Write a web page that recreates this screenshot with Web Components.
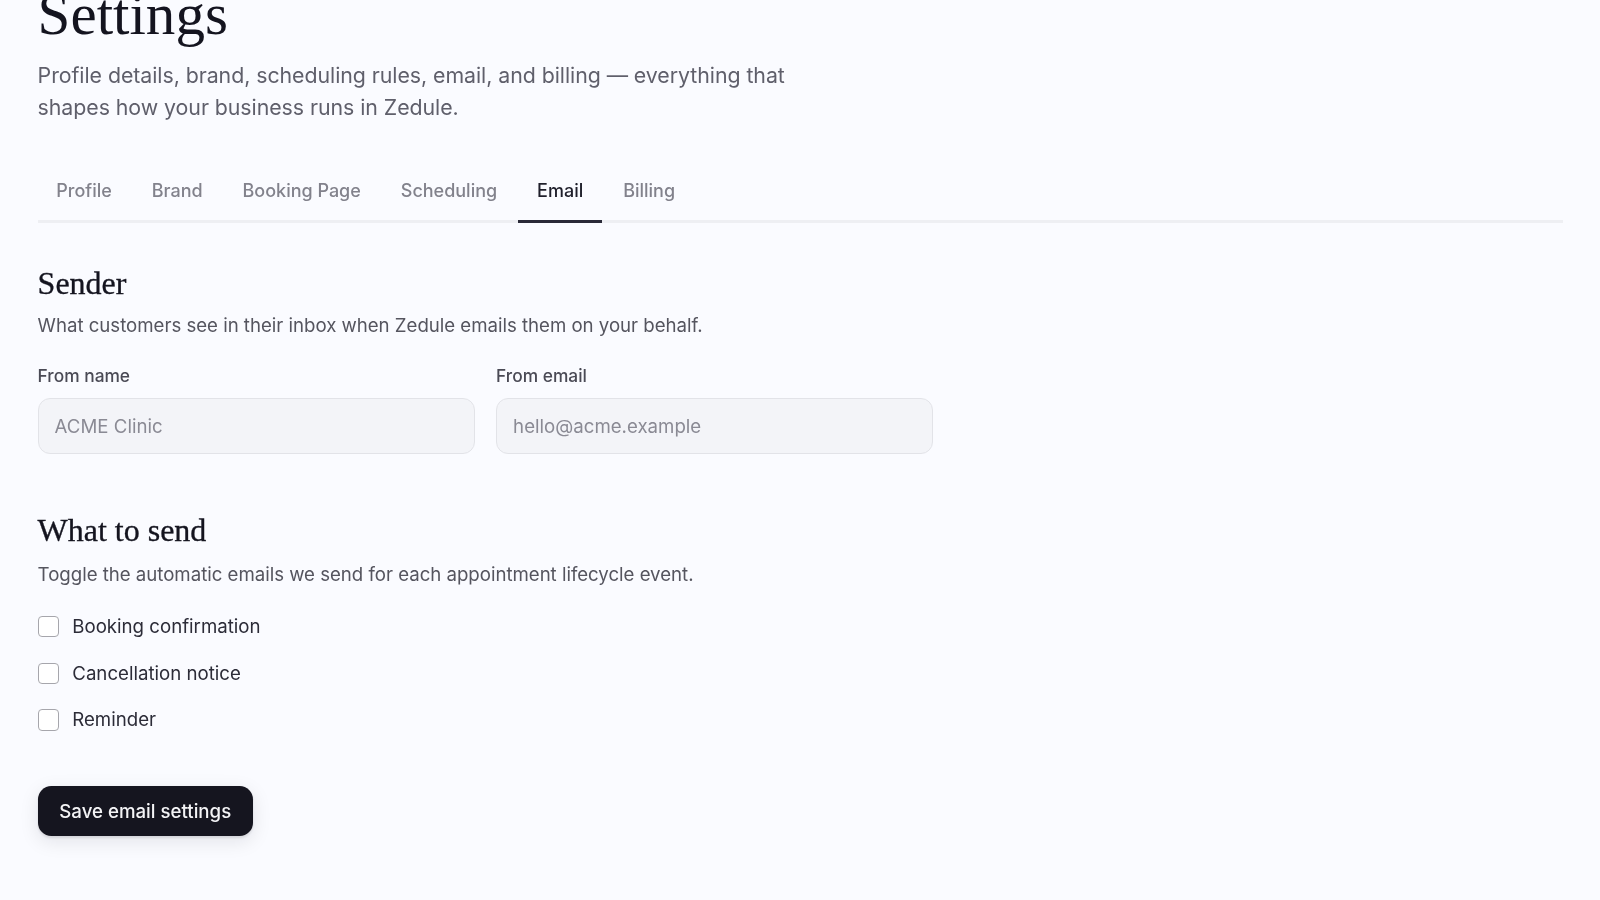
<!doctype html>
<html lang="en"><head><meta charset="utf-8"><title>Settings</title>
<style>
html{zoom:1.3333;background:#fafbff}
body{margin:0;background:#fafbff;font-family:Inter,"Noto Sans",sans-serif;overflow:hidden;height:675px}
</style></head><body>
<settings-page>
  <page-head title="Settings">Profile details, brand, scheduling rules, email, and billing — everything that shapes how your business runs in Zedule.</page-head>
  <tab-bar>
    <tab-item>Profile</tab-item><tab-item>Brand</tab-item><tab-item>Booking Page</tab-item><tab-item>Scheduling</tab-item><tab-item active>Email</tab-item><tab-item>Billing</tab-item>
  </tab-bar>
  <form-section heading="Sender" note="What customers see in their inbox when Zedule emails them on your behalf.">
    <field-grid>
      <text-field label="From name" placeholder="ACME Clinic"></text-field>
      <text-field label="From email" placeholder="hello@acme.example"></text-field>
    </field-grid>
  </form-section>
  <form-section class="second" heading="What to send" note="Toggle the automatic emails we send for each appointment lifecycle event.">
    <check-list>
      <check-row>Booking confirmation</check-row>
      <check-row>Cancellation notice</check-row>
      <check-row>Reminder</check-row>
    </check-list>
  </form-section>
  <save-button>Save email settings</save-button>
</settings-page>
<script>
function def(name, html, setup){
  customElements.define(name, class extends HTMLElement{
    connectedCallback(){
      if(this.shadowRoot) return;
      const r=this.attachShadow({mode:'open'});
      r.innerHTML=html;
      if(setup) setup(this,r);
    }
  });
}
def('settings-page',`<style>:host{display:block;padding:0 28px 0 28.2px;margin-top:-14.75px;filter:blur(.5px)}</style><slot></slot>`);
def('page-head',`<style>
:host{display:block}
h1{margin:0;font:400 44.3px/52px "Liberation Serif",serif;color:#14141f}
p{margin:6.75px 0 0;max-width:580px;font:400 16px/24px Inter,sans-serif;letter-spacing:-.04px;color:#5f5f6b}
</style><h1></h1><p><slot></slot></p>`,(h,r)=>{r.querySelector('h1').textContent=h.getAttribute('title')});
def('tab-bar',`<style>:host{display:flex;gap:2px;margin-top:30px;border-bottom:2.26px solid #eeeff3}</style><slot></slot>`);
def('tab-item',`<style>
:host{display:block;padding:11.75px 14px 11.5px;margin-bottom:-2.26px;font:500 13.5px/20px Inter,sans-serif;color:#82828c;border-bottom:2.26px solid transparent}
:host([active]){color:#1f1f2b;border-bottom-color:#2a2a38}
</style><slot></slot>`);
def('form-section',`<style>
:host{display:block;margin-top:29.5px}
:host(.second){margin-top:42.3px}
h2{margin:0;font:400 24px/30px "Liberation Serif",serif;color:#14141f;-webkit-text-stroke:.25px #14141f}
p{margin:7.6px 0 18.6px;font:400 14px/20px Inter,sans-serif;letter-spacing:-.02px;color:#55555f}
:host(.second) p{margin:8.7px 0 18.9px}
</style><h2></h2><p></p><slot></slot>`,(h,r)=>{r.querySelector('h2').textContent=h.getAttribute('heading');r.querySelector('p').textContent=h.getAttribute('note')});
def('field-grid',`<style>:host{display:grid;grid-template-columns:1fr 1fr;gap:16px;max-width:671.8px}</style><slot></slot>`);
def('text-field',`<style>
:host{display:block}
label{display:block;margin-bottom:7.4px;font:500 13px/18px Inter,sans-serif;color:#4a4a55}
input{display:block;box-sizing:border-box;width:100%;height:42px;padding:0 12px;border:1px solid #e2e3e8;border-radius:9px;background:#f3f4f8;font:400 14px Inter,sans-serif;color:#14141f}
input::placeholder{color:#8a8a94;opacity:1}
</style><label></label><input disabled>`,(h,r)=>{r.querySelector('label').textContent=h.getAttribute('label');r.querySelector('input').placeholder=h.getAttribute('placeholder')});
def('check-list',`<style>:host{display:flex;flex-direction:column;gap:15px}</style><slot></slot>`);
def('check-row',`<style>
:host{display:flex;align-items:center;gap:10px;font:400 14px/20px Inter,sans-serif;color:#2c2c38}
input{appearance:none;margin:0 0 1px;width:16px;height:16px;flex:none;box-sizing:border-box;border:1px solid #a6a6ac;border-radius:3px;background:#fff}
</style><input type="checkbox"><span><slot></slot></span>`);
def('save-button',`<style>
:host{display:inline-block;margin-top:39.3px}
button{display:block;height:37.5px;padding:0 16.3px;border:0;border-radius:10px;background:#15151f;color:#f4f4f6;font:500 14px Inter,sans-serif;box-shadow:0 4px 14px rgba(20,20,31,.1),0 1px 2px rgba(20,20,31,.1)}
</style><button><slot></slot></button>`);
</script>
</body></html>
